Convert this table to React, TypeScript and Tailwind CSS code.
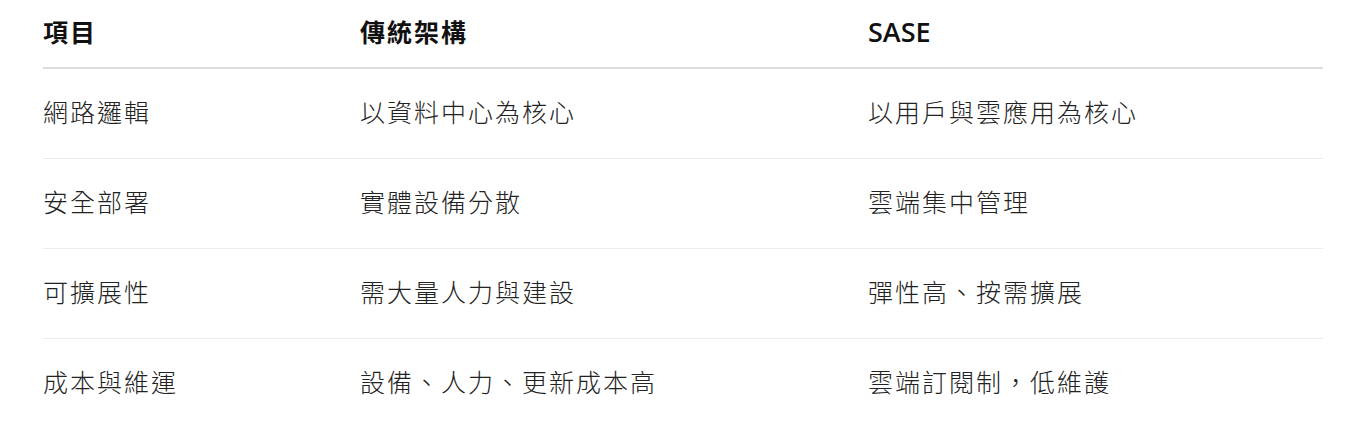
const rows = [
  { item: '網路邏輯', legacy: '以資料中心為核心', sase: '以用戶與雲應用為核心' },
  { item: '安全部署', legacy: '實體設備分散', sase: '雲端集中管理' },
  { item: '可擴展性', legacy: '需大量人力與建設', sase: '彈性高、按需擴展' },
  { item: '成本與維運', legacy: '設備、人力、更新成本高', sase: '雲端訂閱制，低維護' },
]

const cols = 'grid grid-cols-[317px_508px_1fr] items-center'

export default function App() {
  return (
    <div className="min-h-[436px] bg-white px-[43px] pr-[30px] font-['Open_Sans','Noto_Sans_CJK_TC',sans-serif]">
      <div className={`${cols} h-[69px] border-b-2 border-[#dcdcdc] pb-[2px] text-[25px] font-bold tracking-[2px] text-[#111]`}>
        <div>項目</div>
        <div>傳統架構</div>
        <div className="text-[27px] font-semibold tracking-normal">SASE</div>
      </div>
      {rows.map((r, i) => (
        <div
          key={r.item}
          className={`${cols} h-[90px] pb-[2px] text-[25px] font-light tracking-[2px] text-[#222] ${
            i < rows.length - 1 ? 'border-b border-[#ececec]' : ''
          }`}
        >
          <div>{r.item}</div>
          <div>{r.legacy}</div>
          <div>{r.sase}</div>
        </div>
      ))}
    </div>
  )
}
